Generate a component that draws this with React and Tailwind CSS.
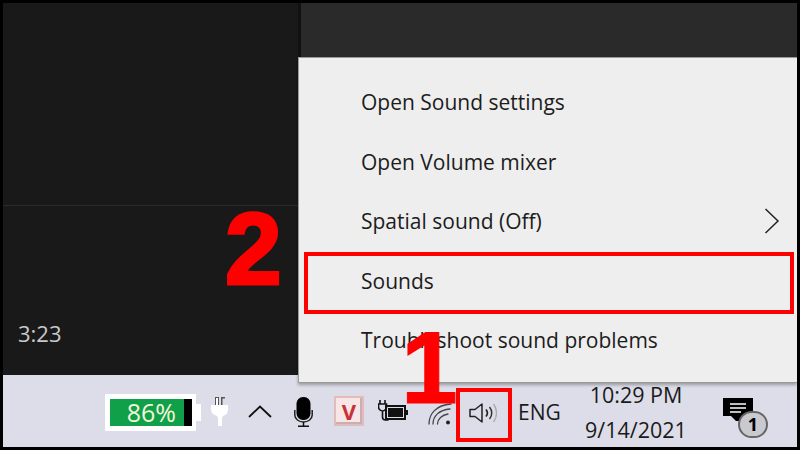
const menuItems = ['Open Sound settings', 'Open Volume mixer', 'Spatial sound (Off)', 'Sounds', 'Troubleshoot sound problems'];

function Battery() {
  return (
    <div className="flex items-center mt-[2px]">
      <div className="flex w-[91px] h-[37px] bg-white p-[5px] pr-[4px]">
        <div className="flex-1 bg-[#10a04a] flex items-center justify-end pr-[8px] text-[25px] leading-none text-[#f2f7d8]">86%</div>
        <div className="w-[8px] bg-black" />
      </div>
      <div className="w-[5px] h-[17px] bg-white" />
    </div>
  );
}

function PowerPlug() {
  return (
    <svg width="17" height="30" viewBox="0 0 17 30" className="ml-[10px] mt-[1px]">
      <path d="M4 0h4v9H4zM10 0h4v1.500h-2.500V9H10z" fill="#555" />
      <path d="M5 1h2v8H5z" fill="#fff" />
      <path d="M0 8h17v4c0 4-2 6-5 7l-1 2v8H7v-8l-1-2c-3-1-6-3-6-7z" fill="#fff" />
    </svg>
  );
}

function Mic() {
  return (
    <svg width="19" height="30" viewBox="0 0 19 30" className="ml-[22px] mt-[1px]">
      <rect x="2.500" y="0" width="14" height="23" rx="6.500" fill="#000" />
      <path d="M0.800 13v5c0 4 4 7 8.700 7s8.700-3 8.700-7v-5" fill="none" stroke="#222" strokeWidth="1.500" />
      <path d="M9.500 25v4M4 29.200h11" fill="none" stroke="#111" strokeWidth="1.500" />
    </svg>
  );
}

function PluginBattery() {
  return (
    <svg width="30" height="22" viewBox="0 0 30 22" className="ml-[14px]">
      <path d="M2 0v4M7 0v4M0.500 4h8v3c0 2-2 4-4 4s-4-2-4-4zM4.500 11v6c0 2 1 3 3 3h3" fill="none" stroke="#111" strokeWidth="1.600" />
      <rect x="8" y="6" width="19" height="13" fill="none" stroke="#111" strokeWidth="2" />
      <rect x="10" y="8" width="15" height="9" fill="#111" />
      <rect x="28" y="10" width="2" height="5" fill="#111" />
    </svg>
  );
}

function Wifi() {
  return (
    <svg width="24" height="22" viewBox="0 0 24 22" className="ml-[20px] mt-[5px]" fill="none" strokeLinecap="round">
      <path d="M1 21C1 11 8 2 23 1" stroke="#444" strokeWidth="1.300" />
      <path d="M5 21C5 13 11 7 22 6" stroke="#444" strokeWidth="1.300" />
      <path d="M9.500 21C9.500 16 14 12 20 11" stroke="#444" strokeWidth="1.300" />
      <circle cx="20" cy="19.500" r="2" fill="#222" />
    </svg>
  );
}

function Speaker() {
  return (
    <svg width="28" height="20" viewBox="0 0 28 20" className="ml-[17px] mt-[3px]" fill="none">
      <path d="M1 6.500h5L13 1v18l-7-5.500H1z" stroke="#222" strokeWidth="1.500" strokeLinejoin="round" />
      <path d="M17 6.500c1.600 2 1.600 5 0 7" stroke="#222" strokeWidth="1.700" />
      <path d="M20.500 4c3 3.500 3 8.500 0 12" stroke="#333" strokeWidth="1.500" />
      <path d="M24.500 1c4 5 4 13 0 18" stroke="#aaa" strokeWidth="1.300" />
    </svg>
  );
}

function Notifications() {
  return (
    <div className="relative w-[45px] h-[40px] ml-[36px] mt-[13px]">
      <svg width="30" height="26" viewBox="0 0 30 26" className="block">
        <path d="M0 0h30v18h-8v5H13L8 18H0z" fill="#000" />
        <path d="M7 6h16M7 10h16M7 14h11" stroke="#fff" strokeWidth="1.300" />
      </svg>
      <div className="absolute left-[15px] top-[13px] w-[30px] h-[27px] rounded-full bg-[#c9c9d0] border-2 border-[#666] flex items-center justify-center text-[18px] font-bold leading-none text-black">1</div>
    </div>
  );
}

export default function App() {
  return (
    <div className="relative w-[800px] h-[450px] overflow-hidden bg-black p-[3px] font-['Open_Sans',sans-serif]">
      <div className="flex flex-col h-full">
        <div className="flex h-[372px]">
          <div className="w-[295px] flex flex-col bg-[#191919]">
            <div className="h-[203px] border-b border-[#2a2a2a]" />
            <div className="flex-1 flex items-end pl-[15px] pb-[28px] text-[22px] leading-[28px] text-[#c6c9cc]">3:23</div>
          </div>
          <div className="flex-1 bg-[#111]">
            <div className="h-[54px] ml-[3px] bg-[#2a2a2a]" />
          </div>
        </div>

        <div className="flex-1 flex items-center pl-[102px] bg-[#dddde9] text-[#1a1a1a]">
          <Battery />
          <PowerPlug />
          <svg width="24" height="13" viewBox="0 0 24 13" className="ml-[20px]" fill="none">
            <path d="M1 12L12 1.500 23 12" stroke="#111" strokeWidth="1.800" />
          </svg>
          <Mic />
          <div className="ml-[21px] w-[30px] h-[30px] bg-[#f6e6e6] border-2 border-[#e2bcbc] shadow-[inset_-2px_-2px_0_#c9b0b0] flex items-center justify-center text-[22px] font-bold leading-none text-[#c8303a]">V</div>
          <PluginBattery />
          <Wifi />
          <Speaker />
          <div className="ml-[21px] mt-[3px] w-[42px] text-[21px] leading-none">ENG</div>
          <div className="ml-[25px] mt-[3px] w-[102px] flex flex-col items-center gap-[9px] text-[21.500px] leading-[26px]">
            <span>10:29 PM</span>
            <span>9/14/2021</span>
          </div>
          <Notifications />
        </div>
      </div>

      {/* context menu sits over the taskbar */}
      <div className="absolute left-[298px] top-[57px] w-[499px] h-[326px] bg-[#eeeeee] border-t border-l border-b border-[#9a9a9a] pt-[15px] pl-[62px] shadow-[0_2px_3px_rgba(0,0,0,0.3)]">
        {menuItems.map((item) => (
          <div key={item} className="relative flex items-center h-[59.500px] text-[21px] text-[#1c1c1c]">
            {item}
            {item.startsWith('Spatial') && (
              <svg width="16" height="26" viewBox="0 0 16 26" className="absolute left-[403px] top-[16px]" fill="none">
                <path d="M1.500 1L14 13 1.500 25" stroke="#222" strokeWidth="1.500" />
              </svg>
            )}
          </div>
        ))}
      </div>

      {/* red annotations */}
      <div className="absolute left-[304px] top-[252px] w-[490px] h-[62px] border-4 border-[#ff0000]" />
      <div className="absolute left-[456px] top-[388px] w-[56px] h-[54px] border-4 border-[#ff0000]" />
      <div className="absolute left-[225px] top-[192px] text-[102px] leading-[115px] font-bold text-[#ff0000] [-webkit-text-stroke:3px_#ff0000] font-['Liberation_Sans',sans-serif]">2</div>
      <div className="absolute left-[401px] top-[311px] text-[102px] leading-[115px] font-bold text-[#ff0000] [-webkit-text-stroke:1px_#ff0000] font-['Liberation_Sans',sans-serif]">1</div>
    </div>
  );
}
